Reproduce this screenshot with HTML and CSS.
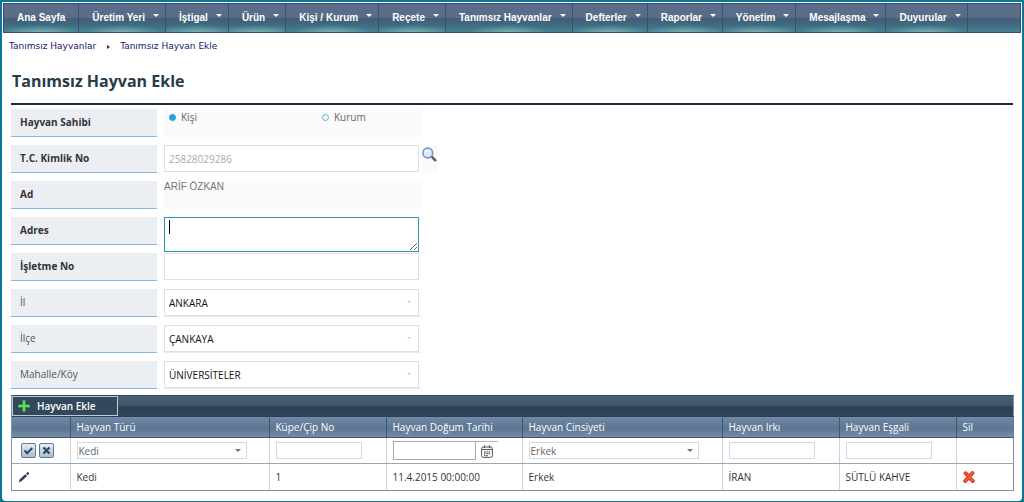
FILE: index.html
```html
<!DOCTYPE html>
<html lang="tr">
<head>
<meta charset="utf-8">
<title>Tanımsız Hayvan Ekle</title>
<link rel="stylesheet" href="styles.css">
</head>
<body>
<div class="panel">
  <nav class="menu">
    <a class="menu-item plain" href="#">Ana Sayfa</a>
    <a class="menu-item" href="#">Üretim Yeri</a>
    <a class="menu-item" href="#">İştigal</a>
    <a class="menu-item" href="#">Ürün</a>
    <a class="menu-item" href="#">Kişi / Kurum</a>
    <a class="menu-item" href="#">Reçete</a>
    <a class="menu-item" href="#">Tanımsız Hayvanlar</a>
    <a class="menu-item" href="#">Defterler</a>
    <a class="menu-item" href="#">Raporlar</a>
    <a class="menu-item" href="#">Yönetim</a>
    <a class="menu-item" href="#">Mesajlaşma</a>
    <a class="menu-item" href="#">Duyurular</a>
  </nav>
  <div class="breadcrumb">
    <a href="#">Tanımsız Hayvanlar</a>
    <span class="crumb-arrow"></span>
    <a href="#">Tanımsız Hayvan Ekle</a>
  </div>
  <main class="content">
    <h1 class="title">Tanımsız Hayvan Ekle</h1>
    <form class="form">
      <div class="row">
        <span class="label" id="owner">Hayvan Sahibi</span>
        <div class="cell shaded radios" role="radiogroup" aria-labelledby="owner">
          <label class="radio"><input type="radio" name="owner" checked>Kişi</label>
          <label class="radio"><input type="radio" name="owner">Kurum</label>
        </div>
      </div>
      <div class="row">
        <label class="label" for="tc">T.C. Kimlik No</label>
        <div class="cell"><input class="field" id="tc" type="text" value="25828029286" disabled></div>
        <button class="search" type="button" aria-label="Ara">
          <svg width="16" height="16" viewBox="0 0 16 16"><path d="M9.500 9.500l3.800 3.800" stroke="#5b5558" stroke-width="2.400" stroke-linecap="round"/><circle cx="5.800" cy="6" r="4.900" fill="#dcecfb" stroke="#7b93c4" stroke-width="1.600"/><path d="M3.300 5.800a2.800 2.800 0 0 1 2.500-2.600" stroke="#fff" stroke-width="1.200" fill="none"/></svg>
        </button>
      </div>
      <div class="row">
        <span class="label">Ad</span>
        <div class="cell shaded name">ARİF ÖZKAN</div>
      </div>
      <div class="row">
        <label class="label" for="adres">Adres</label>
        <div class="cell"><textarea class="field address" id="adres"></textarea><span class="caret"></span></div>
      </div>
      <div class="row">
        <label class="label" for="isletme">İşletme No</label>
        <div class="cell"><input class="field" id="isletme" type="text"></div>
      </div>
      <div class="row">
        <label class="label light" for="il">İl</label>
        <div class="cell lined"><span class="pick"><select class="field" id="il"><option>ANKARA</option></select></span></div>
      </div>
      <div class="row">
        <label class="label light" for="ilce">İlçe</label>
        <div class="cell lined"><span class="pick"><select class="field" id="ilce"><option>ÇANKAYA</option></select></span></div>
      </div>
      <div class="row">
        <label class="label light" for="mahalle">Mahalle/Köy</label>
        <div class="cell lined"><span class="pick"><select class="field" id="mahalle"><option>ÜNİVERSİTELER</option></select></span></div>
      </div>
    </form>

    <section class="grid">
      <div class="toolbar">
        <button class="add" type="button">
          <svg width="12" height="12" viewBox="0 0 12 12"><path d="M6 0v12M0 6h12" stroke="#2f9a3a" stroke-width="3.400"/><path d="M6 .7v10.600M.7 6h10.600" stroke="#66dc62" stroke-width="2"/></svg>
          Hayvan Ekle
        </button>
      </div>
      <table class="table">
        <colgroup><col class="c-tool"><col class="c-kind"><col class="c-chip"><col class="c-date"><col class="c-sex"><col class="c-chip"><col class="c-chip"><col class="c-tool"></colgroup>
        <thead>
          <tr><th></th><th>Hayvan Türü</th><th>Küpe/Çip No</th><th>Hayvan Doğum Tarihi</th><th>Hayvan Cinsiyeti</th><th>Hayvan Irkı</th><th>Hayvan Eşgali</th><th>Sil</th></tr>
        </thead>
        <tbody>
          <tr>
            <td><div class="tools">
              <button class="tool" type="button" aria-label="Kaydet"><svg width="11" height="11" viewBox="0 0 11 11"><path d="M1.500 5.500l2.700 2.700 5-5.200" fill="none" stroke="#2f4a66" stroke-width="2"/></svg></button>
              <button class="tool" type="button" aria-label="İptal"><svg width="11" height="11" viewBox="0 0 11 11"><path d="M2.500 2.500l6 6M8.500 2.500l-6 6" stroke="#2f4a66" stroke-width="2.400"/></svg></button>
            </div></td>
            <td><span class="pick small"><select class="mini wide" aria-label="Hayvan Türü"><option>Kedi</option></select></span></td>
            <td><input class="mini" type="text" aria-label="Küpe/Çip No"></td>
            <td><div class="date"><input class="mini inset" type="text" aria-label="Hayvan Doğum Tarihi"><button class="calendar" type="button" aria-label="Takvim"><svg width="12" height="13" viewBox="0 0 12 13"><rect x=".6" y="2" width="10.800" height="10.400" rx="1.800" fill="#fff" stroke="#555"/><path d="M1 4.500h10" stroke="#555"/><path d="M3.500.5v2.500M8.500.5v2.500" stroke="#555" stroke-width="1.300"/><path d="M3 6.800h6.500M3 8.700h6.500M3 10.600h3.800" stroke="#555" stroke-width="1.200" stroke-dasharray="1.500 .8"/></svg></button></div></td>
            <td><span class="pick small"><select class="mini wide" aria-label="Hayvan Cinsiyeti"><option>Erkek</option></select></span></td>
            <td><input class="mini" type="text" aria-label="Hayvan Irkı"></td>
            <td><input class="mini" type="text" aria-label="Hayvan Eşgali"></td>
            <td></td>
          </tr>
          <tr>
            <td><button class="icon" type="button" aria-label="Düzenle"><svg width="12" height="12" viewBox="0 0 12 12"><path d="M.8 11.200l.8-2.800 5.600-5.200 1.900 1.900-5.600 5.200zM8 2.500l1.300-1.200q.6-.4 1.200.1l.4.4q.5.6 0 1.200L9.800 4.300z" fill="#2b3f57"/></svg></button></td>
            <td>Kedi</td><td>1</td><td>11.4.2015 00:00:00</td><td>Erkek</td><td>İRAN</td><td>SÜTLÜ KAHVE</td>
            <td><button class="icon delete" type="button" aria-label="Sil"><svg width="12" height="12" viewBox="0 0 12 12"><path d="M2.500 2.200Q5 4.500 6 6T9.800 10M9.500 2Q7.500 4 6 6T2.200 10" fill="none" stroke="#c93317" stroke-width="3.800" stroke-linecap="round"/><path d="M2.500 2.200Q5 4.500 6 6T9.800 10M9.500 2Q7.500 4 6 6T2.200 10" fill="none" stroke="#f2552f" stroke-width="2.400" stroke-linecap="round"/></svg></button></td>
          </tr>
        </tbody>
      </table>
    </section>
  </main>
</div>
</body>
</html>
```
FILE: styles.css
```css
* { box-sizing: border-box; }
html { background: #0a7893; }
body {
  margin: 0;
  padding: 2px 2px 2px;
  font: 10px/16px "Open Sans", "Noto Sans", sans-serif;
  color: #333;
}
button, input, select, textarea { font: inherit; color: inherit; margin: 0; }
button { padding: 0; border: 0; background: none; }
svg { display: block; }

.panel {
  background: #fff;
  border-radius: 0 0 4px 4px;
  padding: 1px 1px 10px;
}

.menu {
  display: flex;
  height: 30px;
  border: 1px solid #34506a;
  background: linear-gradient(#576e8b, #5a6d89 50%, #435c77 52%, #3e6c80 75%, #458291);
}
.menu-item {
  display: flex;
  align-items: center;
  padding: 0 6px 0 13px;
  border-right: 1px solid #3a526b;
  background: radial-gradient(ellipse 40px 7px at 50% 100%, rgba(150, 205, 205, .6), transparent);
  color: #fff;
  font: bold 10px/14px "Liberation Sans", Arial, sans-serif;
  text-decoration: none;
  white-space: nowrap;
}
.menu-item::after {
  content: "";
  margin: 0 0 5px 8px;
  border: 3px solid transparent;
  border-top-color: #fff;
  border-bottom: 0;
}
.menu-item.plain { padding-right: 13px; }
.menu-item.plain::after { content: none; }

.breadcrumb {
  display: flex;
  align-items: center;
  padding: 5px 6px;
  font: 9px/16px "DejaVu Sans", Verdana, sans-serif;
}
.breadcrumb a { color: #1c1470; text-decoration: none; }
.crumb-arrow {
  margin: 2px 10px 0 11px;
  border: 2px solid transparent;
  border-left: 3px solid #333;
  border-right: 0;
}

.content { padding: 0 7px 0 8px; }
.title {
  margin: 0 1px 4px 0;
  padding: 10px 0 10px 1px;
  border-bottom: 2px solid #1c2c3b;
  color: #263c48;
  font-size: 16px;
  line-height: 24px;
}

.form { display: grid; gap: 8px; margin-bottom: 6px; }
.row { display: flex; height: 28px; }
.label {
  width: 146px;
  margin-right: 7px;
  padding: 5px 9px;
  border-bottom: 1px solid #86b5e6;
  background: #ebeef3;
  font-weight: 700;
}
.label.light { font-weight: 400; color: #555; }
.cell { position: relative; width: 258px; }
.cell.shaded { background: #fafafa; }
.cell.lined { border-bottom: 1px solid #e9edf1; }
.radios { display: flex; color: #666; }
.radio { display: flex; align-items: flex-start; gap: 5px; width: 153px; padding-left: 5px; white-space: nowrap; }
.radios .radio + .radio { width: auto; }
.radio input {
  appearance: none;
  width: 7px;
  height: 7px;
  margin-top: 5px;
  border: 1px solid #5eb0da;
  border-radius: 50%;
}
.radio input:checked { background: #2a9fd0; border-color: #2a9fd0; }
.name { color: #777; font: 10px/12px "Liberation Sans", Arial, sans-serif; }
.field {
  appearance: none;
  display: block;
  width: 255px;
  height: 27px;
  padding: 0 4px;
  border: 1px solid #dde0e5;
  border-radius: 0;
  background: #fff;
  color: #111;
  outline: 0;
}
.field:disabled { color: #aaa; }
.address { height: 35px; border-color: #2f95b5; }
.caret { position: absolute; left: 5px; top: 3px; width: 1px; height: 14px; background: #000; }
.pick { position: relative; display: block; width: 255px; }
.pick::after {
  content: "";
  position: absolute;
  right: 8px;
  top: 12px;
  border: 2px solid transparent;
  border-top-color: #c5cad2;
  border-bottom: 0;
}
.search { width: 16px; height: 28px; background: #fafafa; }
.search svg { margin-bottom: 8px; }

.grid { border: 1px solid #8390a5; border-top-color: #33475a; }
.toolbar { display: flex; background: linear-gradient(#4b6177, #3c5265 50%, #2c4054 55%, #32465a); }
.add {
  display: flex;
  align-items: center;
  gap: 7px;
  width: 106px;
  height: 20px;
  padding-left: 5px;
  border: 1px solid #bcc8d3;
  background: #33485c;
  color: #fff;
  font-weight: 600;
}
.table { width: 100%; border-collapse: collapse; table-layout: fixed; }
.c-tool { width: 58px; }
.c-kind { width: 199px; }
.c-sex { width: 200px; }
.c-chip { width: 117px; }
.c-date { width: 136px; }
.table th {
  height: 21px;
  padding: 0 6px;
  border-right: 1px solid #40566f;
  border-bottom: 1px solid #40566f;
  border-top: 1px solid #2c4054;
  background: linear-gradient(#7089a7, #5d7692 50%, #607993 60%, #7790a8);
  color: #fff;
  font-weight: 400;
  text-align: left;
  white-space: nowrap;
}
.table td {
  height: 26px;
  padding: 0 6px;
  border-right: 1px solid #ccd3dd;
  border-bottom: 1px solid #98a8bb;
  color: #333;
}
.table tr > :last-child { border-right: 0; }
.table tbody tr:last-child td { border-bottom: 0; }
.tools { display: flex; gap: 3px; padding-left: 3px; }
.tool {
  display: grid;
  place-items: center;
  width: 15px;
  height: 15px;
  border: 1px solid #647b94;
  border-radius: 2px;
  background: linear-gradient(#e4edf5, #a9bfd2);
}
.mini {
  appearance: none;
  display: block;
  width: 86px;
  height: 17px;
  padding: 0 1px;
  border: 1px solid #d5d9df;
  border-radius: 0;
  background: #fff;
}
.mini.wide { width: 100%; color: #666; }
.pick.small { width: 170px; }
.pick.small::after { top: 7px; right: 6px; border-width: 3px; border-bottom: 0; border-top-color: #777; }
.mini.inset { width: 83px; border-color: #aaa; height: 19px; }
.date { display: flex; }
.calendar { display: grid; place-items: center; width: 22px; border-top: 1px solid #b5b5b5; }
.icon { display: block; }
```
